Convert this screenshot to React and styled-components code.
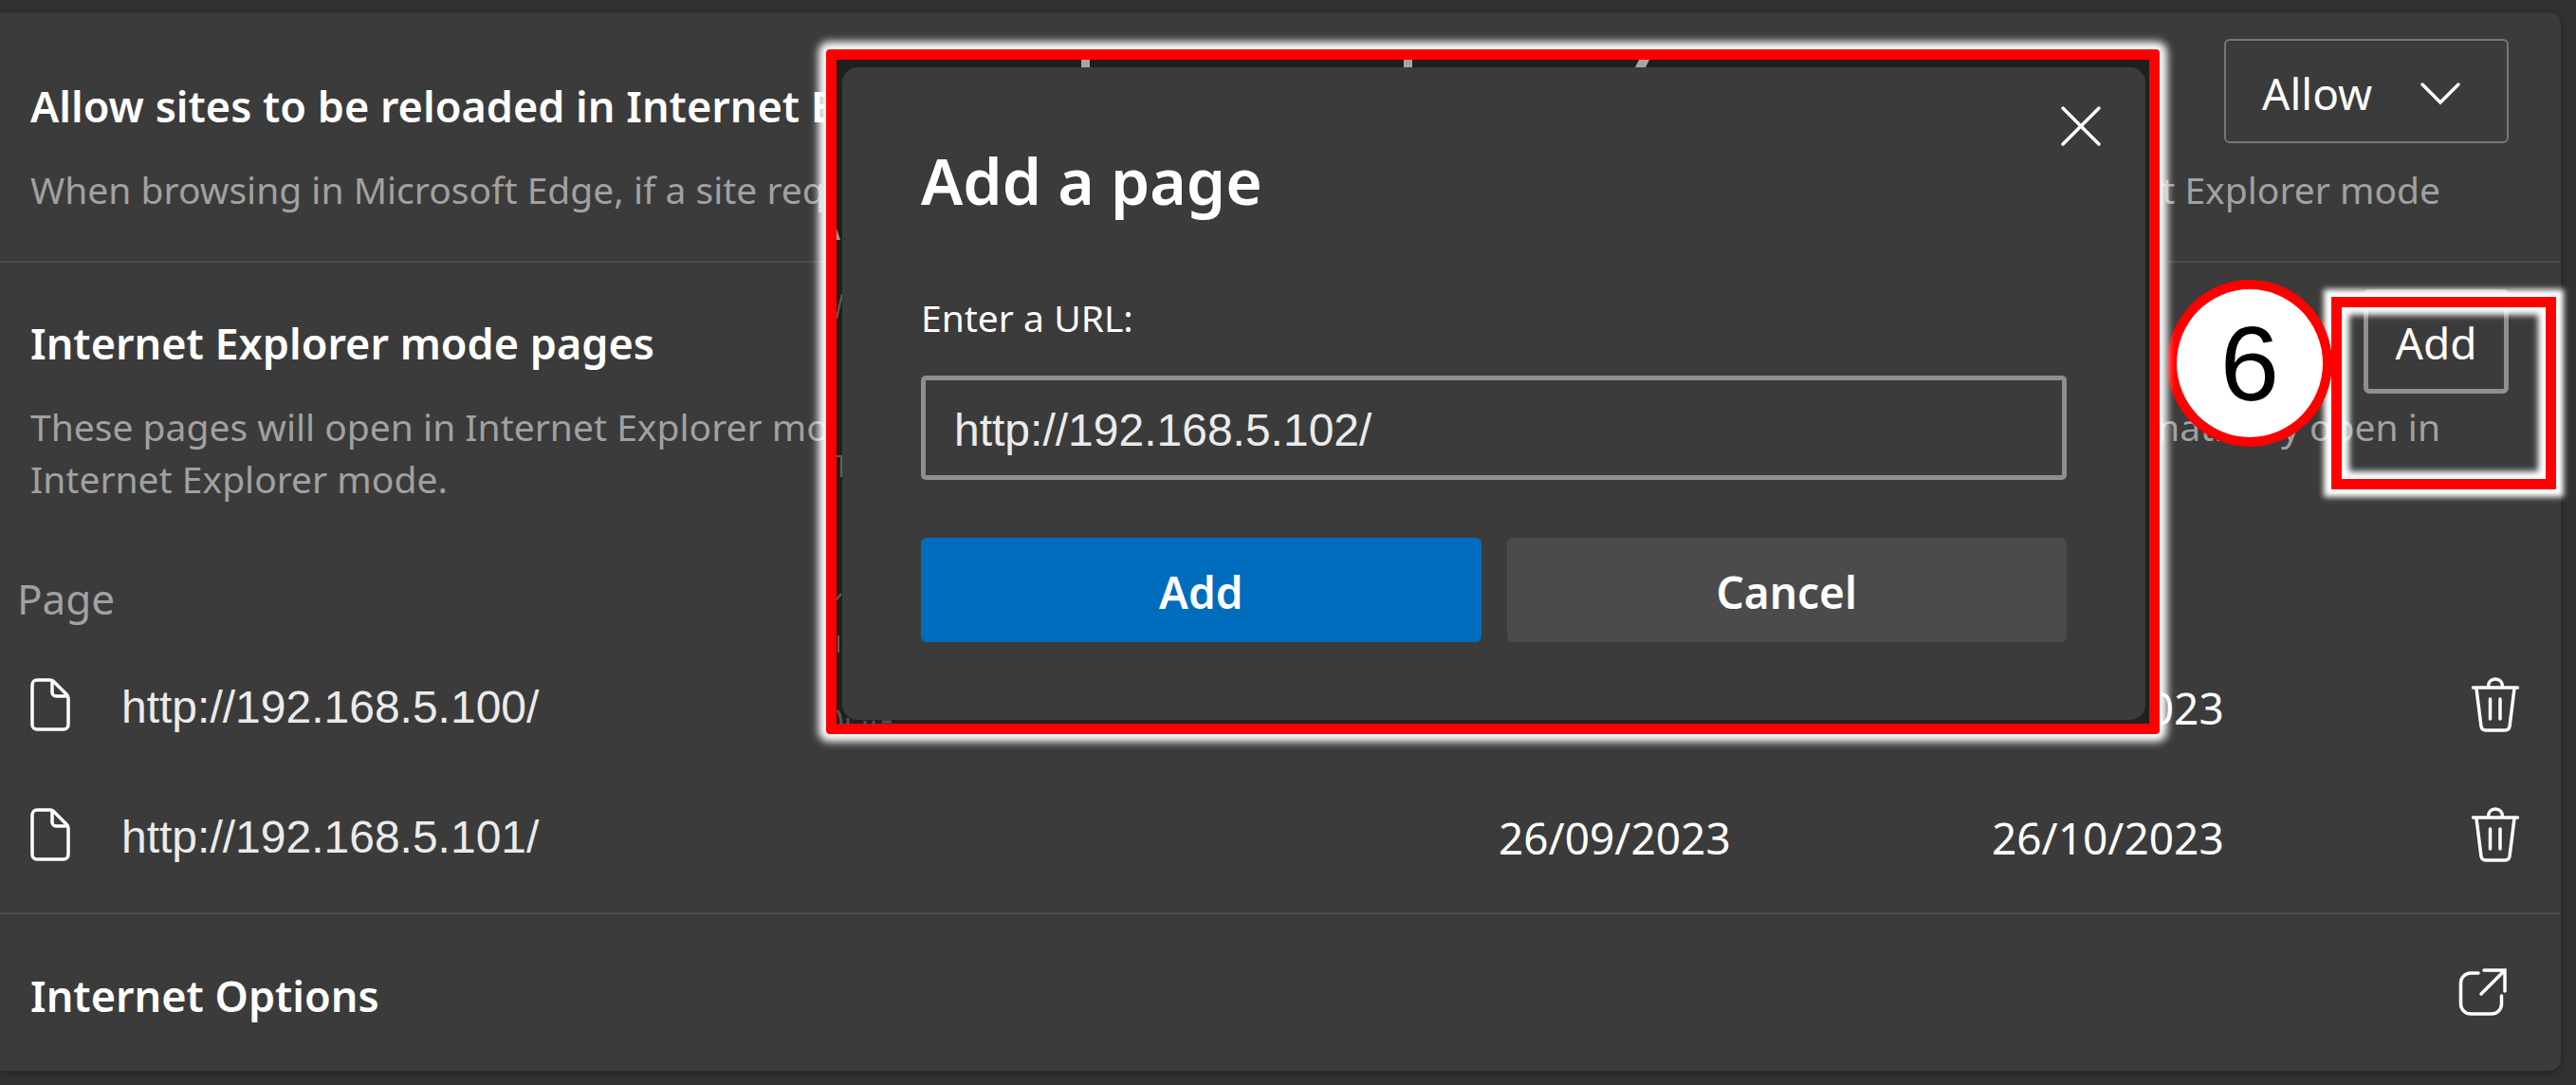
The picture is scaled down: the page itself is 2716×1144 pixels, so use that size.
import React, { useState } from "react";
import styled, { createGlobalStyle } from "styled-components";

const ui = '"Segoe UI", "Noto Sans", sans-serif';
const plain = '"Liberation Sans", Arial, sans-serif';

const GlobalStyle = createGlobalStyle`
  *, *::before, *::after { box-sizing: border-box; }
  body { margin: 0; background: #323232; color: #fff; font-family: ${ui}; overflow-x: hidden; }
  button, input, select { font: inherit; color: inherit; margin: 0; }
`;

const Page = styled.div`
  position: relative;
  padding: 13px 16px 12px 0;
  background: #323232;
`;

const Card = styled.main`
  background: #3b3b3b;
  border-radius: 0 12px 12px 0;
  box-shadow: 0 2px 8px rgba(0, 0, 0, 0.35);
`;

const Section = styled.section`
  padding: ${(p) => p.$pad};
  & + & { border-top: 2px solid #4c4c4c; }
`;

const SectionHead = styled.div`
  display: flex;
  justify-content: space-between;
  align-items: flex-start;
  padding: 0 55px 0 32px;
`;

const Title = styled.h2`
  margin: 0;
  padding-top: ${(p) => p.$drop || 0}px;
  font-size: 45px;
  line-height: 60px;
  font-weight: 600;
`;

const Description = styled.p`
  margin: ${(p) => p.$gap}px 127px 0 32px;
  color: #a1a1a1;
  font-size: 39px;
  line-height: 55px;
`;

const Spread = styled.span`
  display: flex;
  justify-content: space-between;
  white-space: nowrap;
`;

const SelectWrap = styled.div`
  position: relative;
  svg { position: absolute; right: 50px; top: 44px; pointer-events: none; }
`;

const Select = styled.select`
  display: block;
  appearance: none;
  width: 300px;
  height: 110px;
  padding: 4px 0 0 38px;
  border: 2px solid #767676;
  border-radius: 6px;
  background: transparent;
  font-size: 46px;
`;

const OutlineButton = styled.button`
  width: 153px;
  height: 110px;
  padding: 2px 0 0;
  border: 5px solid #8f8f8f;
  border-radius: 6px;
  background: transparent;
  font-size: 46px;
`;

const PagesTable = styled.table`
  width: 100%;
  margin-top: 55px;
  border-collapse: collapse;
  table-layout: fixed;
  th, td { padding: 0; text-align: left; font-weight: 400; }
`;

const HeadCell = styled.th`
  width: ${(p) => p.$width || "auto"};
  height: 87px;
  color: #a1a1a1;
  font-size: 44px;
  line-height: 60px;
  &&:first-child { padding-left: 18px; }
`;

const Cell = styled.td`
  height: 137px;
  font-size: 46px;
  line-height: 60px;
`;

const DateText = styled.time`
  display: block;
  padding-top: 6px;
`;

const PageLink = styled.div`
  display: flex;
  align-items: center;
  gap: 48px;
  padding-left: 28px;
  font-family: ${plain};
  font-size: 48px;
  color: #ebebeb;
`;

const Address = styled.span`
  padding-top: 6px;
`;

const IconButton = styled.button`
  display: block;
  padding: 0;
  border: 0;
  background: none;
  svg { display: block; }
`;

const OptionsRow = styled.div`
  display: flex;
  justify-content: space-between;
  align-items: center;
  height: 165px;
  padding: 0 56px 0 32px;
`;

const IconLink = styled.a`
  color: #fff;
  svg { display: block; }
`;

const StepBadge = styled.div`
  position: absolute;
  top: 295px;
  right: 257px;
  width: 174px;
  height: 176px;
  display: flex;
  align-items: center;
  justify-content: center;
  border: 10px solid #f00;
  border-radius: 50%;
  background: #fff;
  color: #000;
  font-family: ${plain};
  font-size: 112px;
`;

const Highlight = styled.div`
  position: absolute;
  top: 313px;
  right: 21px;
  width: 237px;
  height: 203px;
  border: 11px solid #f00;
  box-shadow: 0 0 6px 8px #fff, inset 0 0 6px 8px #fff;
  pointer-events: none;
`;

const Frame = styled.div`
  position: absolute;
  top: 52px;
  left: 871px;
  right: 439px;
  padding: 8px 4px 4px 6px;
  border: 11px solid #f00;
  border-radius: 4px;
  background: #202020;
  box-shadow: 0 0 8px 8px #fff;
`;

const Traces = styled.svg`
  position: absolute;
  inset: 0;
`;

const Dialog = styled.form`
  position: relative;
  display: flex;
  flex-direction: column;
  padding: 74px 83px 82px;
  border-radius: 16px;
  background: #3b3b3b;
`;

const DialogTitle = styled.h1`
  margin: 0;
  font-size: 66px;
  line-height: 90px;
  font-weight: 600;
`;

const CloseButton = styled(IconButton)`
  position: absolute;
  top: 40px;
  right: 46px;
`;

const FieldLabel = styled.label`
  margin-top: 70px;
  font-size: 39px;
  line-height: 60px;
`;

const UrlInput = styled.input`
  width: 100%;
  height: 110px;
  margin-top: 31px;
  padding: 4px 30px 0;
  border: 5px solid #8f8f8f;
  border-radius: 5px;
  outline: none;
  background: transparent;
  color: #ebebeb;
  font-family: ${plain};
  font-size: 48px;
`;

const Actions = styled.div`
  display: grid;
  grid-template-columns: 1fr 1fr;
  gap: 27px;
  margin-top: 61px;
`;

const ActionButton = styled.button`
  height: 110px;
  padding: 4px 0 0;
  border: 0;
  border-radius: 6px;
  background: ${(p) => (p.$primary ? "#006cbe" : "#4b4b4b")};
  font-size: 46px;
  font-weight: 600;
`;

const FileIcon = () => (
  <svg width="52" height="64" viewBox="0 0 52 64" fill="none" stroke="#fff" strokeWidth="3.500" strokeLinejoin="round" aria-hidden="true">
    <path d="M11 6h14a5 5 0 0 1 3.500 1.500L42.500 21.500a5 5 0 0 1 1.500 3.500V53a5 5 0 0 1-5 5H11a5 5 0 0 1-5-5V11a5 5 0 0 1 5-5z" />
    <path d="M27 7v12a4 4 0 0 0 4 4h12" />
  </svg>
);

const TrashIcon = () => (
  <svg width="52" height="58" viewBox="0 0 52 58" fill="none" stroke="#fff" strokeWidth="3.500" strokeLinecap="round" aria-hidden="true">
    <path d="M2.500 11h47M18.500 10c0-5 3-8 7.500-8s7.500 3 7.500 8" />
    <path d="M6 12l5 40a5 5 0 0 0 5 4h20a5 5 0 0 0 5-4L46 12M20.500 23v21M31 23v21" />
  </svg>
);

const OpenIcon = () => (
  <svg width="52" height="56" viewBox="0 0 52 56" fill="none" stroke="#fff" strokeWidth="3.500" strokeLinecap="round" aria-hidden="true">
    <path d="M21 7h-8A10.500 10.500 0 0 0 2.500 17.500v22A10.500 10.500 0 0 0 13 50h22a10.500 10.500 0 0 0 10.500-10.500V31" />
    <path d="M27 4h22v22M49 4L24 29" />
  </svg>
);

const ChevronIcon = () => (
  <svg width="44" height="26" viewBox="0 0 44 26" fill="none" stroke="#fff" strokeWidth="3.500" strokeLinecap="round" aria-hidden="true">
    <path d="M3 4l19 19L41 4" />
  </svg>
);

const CloseIcon = () => (
  <svg width="44" height="44" viewBox="0 0 44 44" stroke="#fff" strokeWidth="3.500" strokeLinecap="round" aria-hidden="true">
    <path d="M3 3l38 38M41 3L3 41" />
  </svg>
);

/* What shows of the dimmed page in the thin gap round the dialog. */
const DimmedTraces = () => (
  <Traces width="870" height="701" viewBox="0 0 870 701" aria-hidden="true">
    <path fill="#a5a5a5" d="M258 0h9v8h-9zM598 0h9v8h-9zM846 0h11l-4 8h-11z" />
    <path fill="#9a9a9a" d="M0 178l4 12H0z" />
    <path stroke="#5d6063" strokeWidth="2" fill="none" d="M0 273l6-26M0 418h5v22M0 569l5-6M2 607v18" />
    <path stroke="#50555a" strokeWidth="3" fill="none" d="M1 686q4 6 4 15M12 694v7M30 697v4M39 697v4M48 698h10" />
  </Traces>
);

const pages = [
  { url: "http://192.168.5.100/", added: "26/09/2023", expires: "26/10/2023" },
  { url: "http://192.168.5.101/", added: "26/09/2023", expires: "26/10/2023" },
];

export default function App() {
  const [url, setUrl] = useState("http://192.168.5.102/");
  return (
    <>
      <GlobalStyle />
      <Page>
        <Card>
          <Section $pad="28px 0 48px">
            <SectionHead>
              <Title $drop={41}>Allow sites to be reloaded in Internet Explorer</Title>
              <SelectWrap>
                <Select aria-label="Allow sites to be reloaded" defaultValue="Allow">
                  <option>Allow</option>
                </Select>
                <ChevronIcon />
              </SelectWrap>
            </SectionHead>
            <Description $gap={21}>
              <Spread>
                <span>When browsing in Microsoft Edge, if a site requires Internet Explorer for</span>
                <span>you can reload it in Internet Explorer mode</span>
              </Spread>
            </Description>
          </Section>
          <Section $pad="28px 0 14px">
            <SectionHead>
              <Title $drop={27}>Internet Explorer mode pages</Title>
              <OutlineButton type="button">Add</OutlineButton>
            </SectionHead>
            <Description $gap={7}>
              <Spread>
                <span>These pages will open in Internet Explorer mode for 30 days from</span>
                <span>pages that automatically open in</span>
              </Spread>
              Internet Explorer mode.
            </Description>
            <PagesTable>
              <thead>
                <tr>
                  <HeadCell>Page</HeadCell>
                  <HeadCell $width="520px">Date added</HeadCell>
                  <HeadCell $width="505px">Expires</HeadCell>
                  <HeadCell $width="95px" aria-label="Remove" />
                </tr>
              </thead>
              <tbody>
                {pages.map((p) => (
                  <tr key={p.url}>
                    <Cell>
                      <PageLink>
                        <FileIcon />
                        <Address>{p.url}</Address>
                      </PageLink>
                    </Cell>
                    <Cell>
                      <DateText>{p.added}</DateText>
                    </Cell>
                    <Cell>
                      <DateText>{p.expires}</DateText>
                    </Cell>
                    <Cell>
                      <IconButton type="button" aria-label={"Remove " + p.url}>
                        <TrashIcon />
                      </IconButton>
                    </Cell>
                  </tr>
                ))}
              </tbody>
            </PagesTable>
          </Section>
          <Section $pad="0">
            <OptionsRow>
              <Title $drop={6}>Internet Options</Title>
              <IconLink href="#options" aria-label="Open Internet Options">
                <OpenIcon />
              </IconLink>
            </OptionsRow>
          </Section>
        </Card>

        <Highlight />
        <StepBadge>6</StepBadge>
        <Frame>
          <DimmedTraces />
          <Dialog onSubmit={(e) => e.preventDefault()}>
            <CloseButton type="button" aria-label="Close">
              <CloseIcon />
            </CloseButton>
            <DialogTitle>Add a page</DialogTitle>
            <FieldLabel htmlFor="page-url">Enter a URL:</FieldLabel>
            <UrlInput id="page-url" type="text" value={url} onChange={(e) => setUrl(e.target.value)} />
            <Actions>
              <ActionButton type="submit" $primary>Add</ActionButton>
              <ActionButton type="button">Cancel</ActionButton>
            </Actions>
          </Dialog>
        </Frame>
      </Page>
    </>
  );
}
